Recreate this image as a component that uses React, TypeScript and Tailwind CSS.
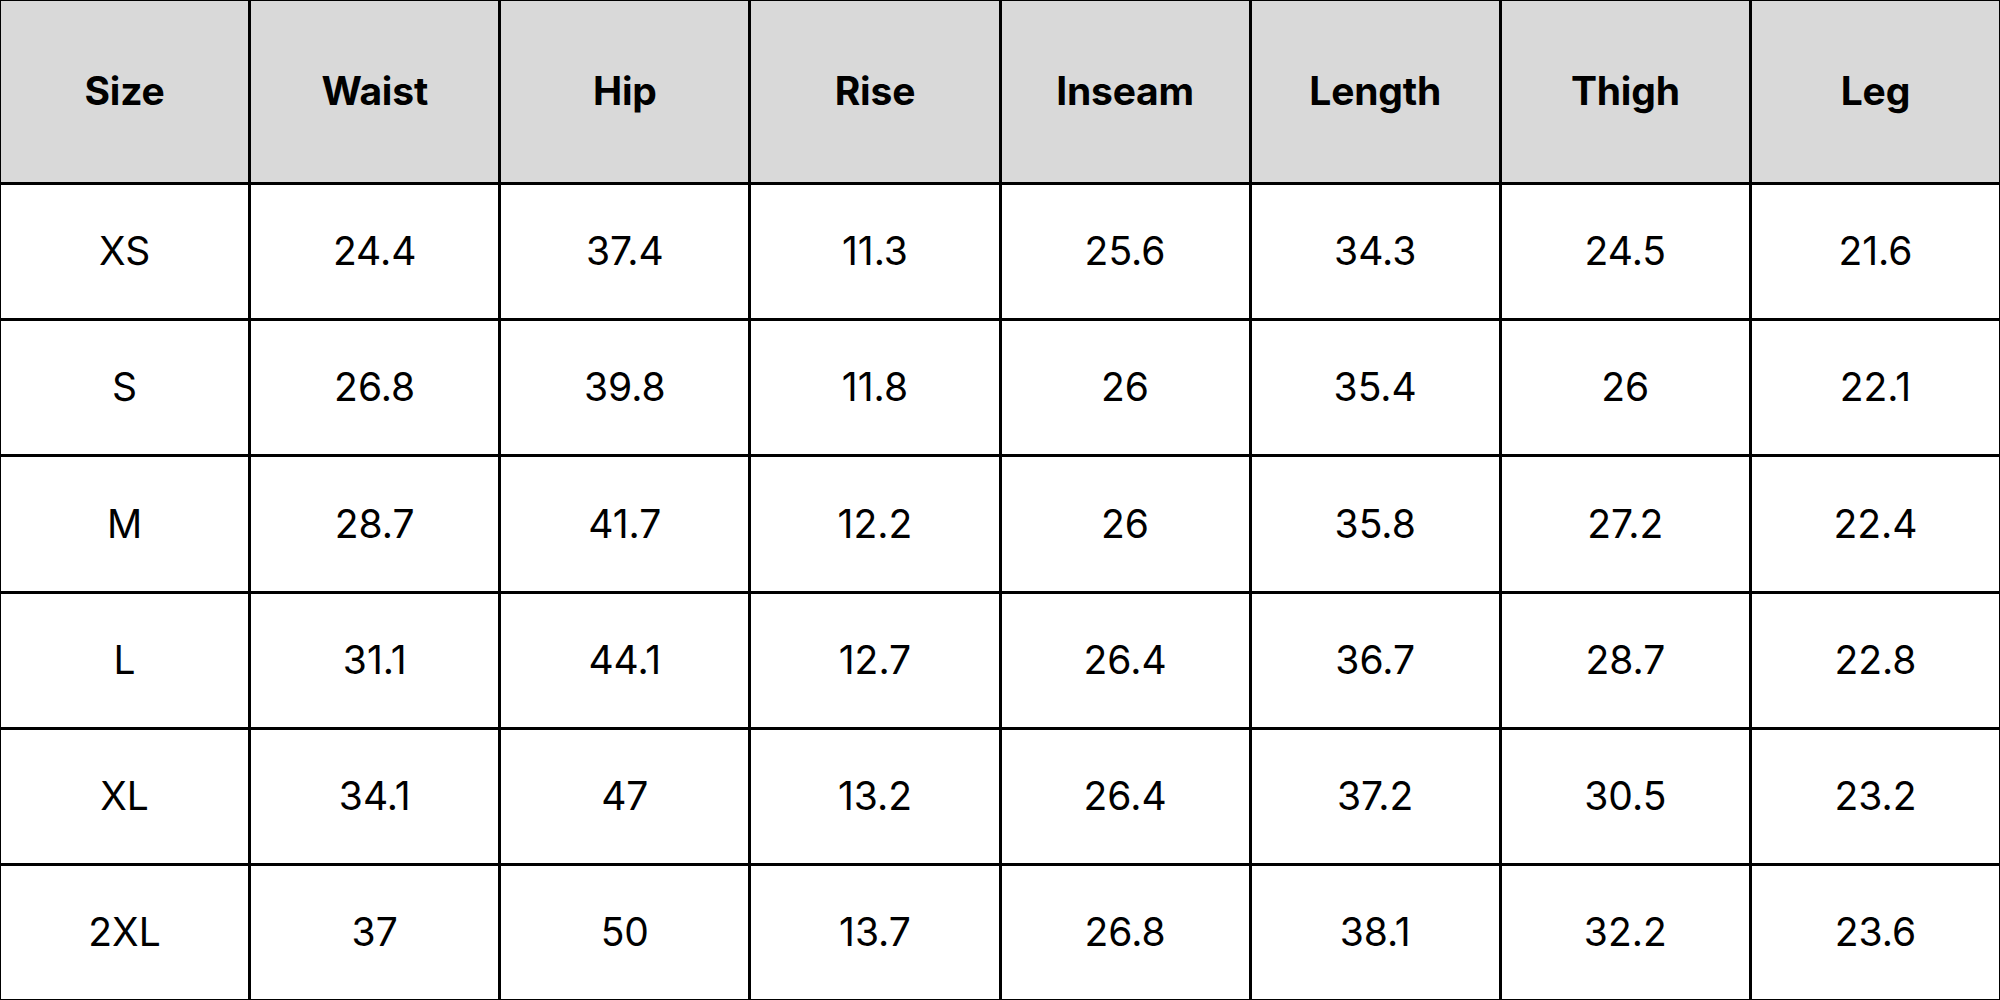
const headers = ["Size", "Waist", "Hip", "Rise", "Inseam", "Length", "Thigh", "Leg"];

const rows: string[][] = [
  ["XS", "24.4", "37.4", "11.3", "25.6", "34.3", "24.5", "21.6"],
  ["S", "26.8", "39.8", "11.8", "26", "35.4", "26", "22.1"],
  ["M", "28.7", "41.7", "12.2", "26", "35.8", "27.2", "22.4"],
  ["L", "31.1", "44.1", "12.7", "26.4", "36.7", "28.7", "22.8"],
  ["XL", "34.1", "47", "13.2", "26.4", "37.2", "30.5", "23.2"],
  ["2XL", "37", "50", "13.7", "26.8", "38.1", "32.2", "23.6"],
];

export default function App() {
  return (
    <div className="w-[2000px] h-[1000px] bg-white font-['Inter',sans-serif] text-black">
      <div className="grid h-full w-full grid-cols-8 grid-rows-[181px_repeat(6,1fr)] gap-[3px] bg-black p-px">
        {headers.map((h) => (
          <div
            key={h}
            className="flex items-center justify-center bg-[#d9d9d9] text-[39px] font-bold tracking-[-0.2px]"
          >
            {h}
          </div>
        ))}
        {rows.map((row) =>
          row.map((cell, i) => (
            <div
              key={row[0] + "-" + i}
              className="flex items-center justify-center bg-white text-[39px] font-normal"
            >
              {cell}
            </div>
          ))
        )}
      </div>
    </div>
  );
}
